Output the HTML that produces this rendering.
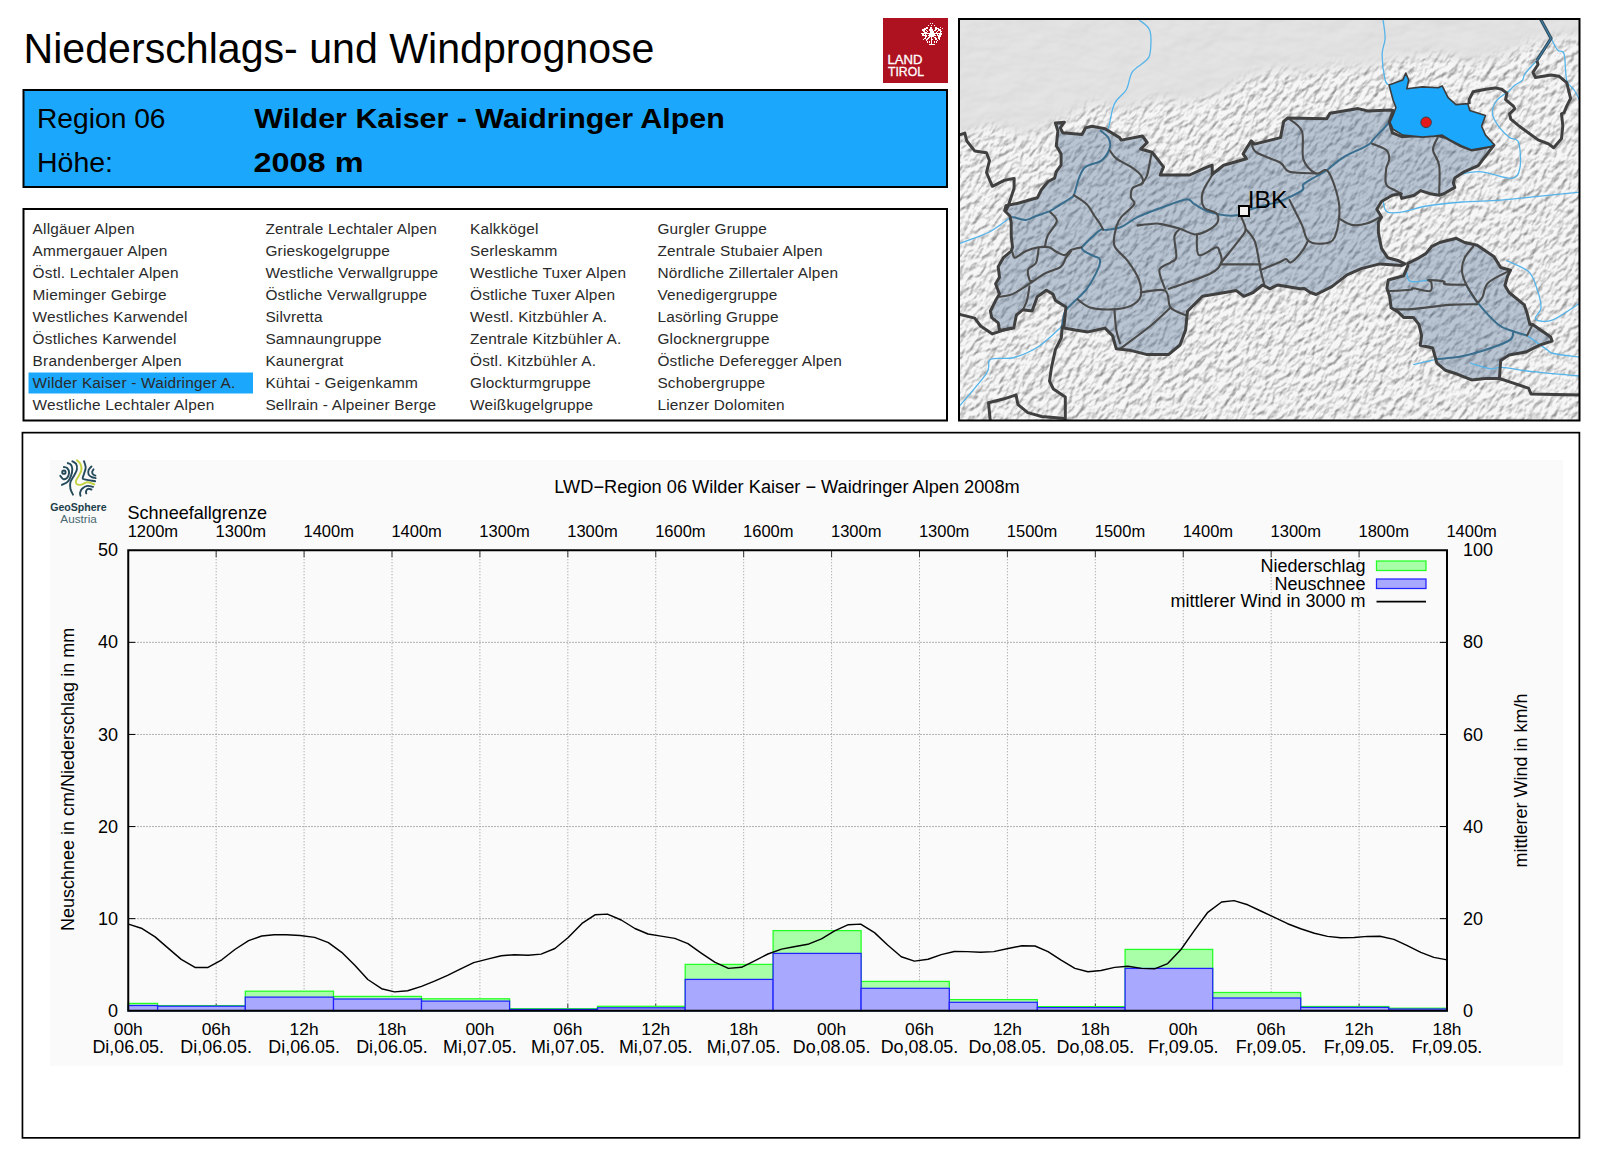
<!DOCTYPE html><html><head><meta charset="utf-8"><style>html,body{margin:0;padding:0;background:#fff;width:1600px;height:1153px;overflow:hidden}svg{display:block}text{font-family:"Liberation Sans",sans-serif}</style></head><body>
<svg width="1600" height="1153" viewBox="0 0 1600 1153">
<text x="23.5" y="62.6" font-size="43" textLength="631" lengthAdjust="spacingAndGlyphs" fill="#000">Niederschlags- und Windprognose</text>
<rect x="883" y="18" width="65" height="65" fill="#ae1120"/>
<text x="887.5" y="63.9" font-size="12.2" fill="#fff" stroke="#fff" stroke-width="0.3" textLength="35" lengthAdjust="spacingAndGlyphs">LAND</text>
<text x="888" y="75.7" font-size="12.2" fill="#fff" stroke="#fff" stroke-width="0.3" textLength="36" lengthAdjust="spacingAndGlyphs">TIROL</text>
<g fill="#fff" shape-rendering="crispEdges">
<rect x="930" y="23" width="1" height="1"/><rect x="932" y="23" width="1" height="1"/><rect x="928" y="25" width="1" height="1"/><rect x="931" y="25" width="1" height="1"/><rect x="934" y="25" width="1" height="1"/><rect x="926" y="27" width="2" height="1"/><rect x="930" y="27" width="2" height="1"/><rect x="935" y="27" width="2" height="1"/><rect x="940" y="27" width="1" height="1"/><rect x="924" y="28" width="4" height="1"/><rect x="930" y="28" width="2" height="1"/><rect x="935" y="28" width="4" height="1"/><rect x="942" y="28" width="1" height="1"/><rect x="922" y="29" width="4" height="1"/><rect x="929" y="29" width="4" height="1"/><rect x="935" y="29" width="2" height="1"/><rect x="938" y="29" width="3" height="1"/><rect x="922" y="30" width="3" height="1"/><rect x="926" y="30" width="1" height="1"/><rect x="929" y="30" width="4" height="1"/><rect x="934" y="30" width="2" height="1"/><rect x="938" y="30" width="3" height="1"/><rect x="923" y="31" width="2" height="1"/><rect x="927" y="31" width="1" height="1"/><rect x="930" y="31" width="4" height="1"/><rect x="937" y="31" width="1" height="1"/><rect x="940" y="31" width="2" height="1"/><rect x="924" y="32" width="3" height="1"/><rect x="930" y="32" width="4" height="1"/><rect x="936" y="32" width="1" height="1"/><rect x="940" y="32" width="1" height="1"/><rect x="921" y="33" width="21" height="1"/><rect x="922" y="34" width="2" height="1"/><rect x="925" y="34" width="1" height="1"/><rect x="929" y="34" width="6" height="1"/><rect x="937" y="34" width="1" height="1"/><rect x="939" y="34" width="3" height="1"/><rect x="922" y="35" width="5" height="1"/><rect x="928" y="35" width="8" height="1"/><rect x="937" y="35" width="4" height="1"/><rect x="925" y="36" width="2" height="1"/><rect x="929" y="36" width="5" height="1"/><rect x="938" y="36" width="3" height="1"/><rect x="925" y="37" width="1" height="1"/><rect x="928" y="37" width="2" height="1"/><rect x="931" y="37" width="1" height="1"/><rect x="934" y="37" width="2" height="1"/><rect x="938" y="37" width="2" height="1"/><rect x="924" y="38" width="2" height="1"/><rect x="927" y="38" width="2" height="1"/><rect x="931" y="38" width="1" height="1"/><rect x="935" y="38" width="2" height="1"/><rect x="938" y="38" width="2" height="1"/><rect x="923" y="39" width="1" height="1"/><rect x="926" y="39" width="2" height="1"/><rect x="931" y="39" width="2" height="1"/><rect x="935" y="39" width="2" height="1"/><rect x="939" y="39" width="1" height="1"/><rect x="926" y="40" width="1" height="1"/><rect x="931" y="40" width="1" height="1"/><rect x="937" y="40" width="1" height="1"/><rect x="927" y="41" width="1" height="1"/><rect x="929" y="41" width="1" height="1"/><rect x="931" y="41" width="1" height="1"/><rect x="934" y="41" width="1" height="1"/><rect x="936" y="41" width="1" height="1"/><rect x="927" y="42" width="1" height="1"/><rect x="929" y="42" width="1" height="1"/><rect x="931" y="42" width="1" height="1"/><rect x="934" y="42" width="1" height="1"/><rect x="936" y="42" width="1" height="1"/><rect x="931" y="43" width="1" height="1"/><rect x="929" y="44" width="6" height="1"/>
</g>
<rect x="23.5" y="90" width="923.5" height="97" fill="#1ba8fc" stroke="#000" stroke-width="2"/>
<text x="37" y="128.4" font-size="28" textLength="128.5" lengthAdjust="spacingAndGlyphs">Region 06</text>
<text x="37" y="172" font-size="28" textLength="76" lengthAdjust="spacingAndGlyphs">Höhe:</text>
<text x="254.3" y="128.4" font-size="28" font-weight="bold" textLength="470.5" lengthAdjust="spacingAndGlyphs">Wilder Kaiser - Waidringer Alpen</text>
<text x="253.5" y="172" font-size="28" font-weight="bold" textLength="110" lengthAdjust="spacingAndGlyphs">2008 m</text>
<rect x="23.5" y="209" width="923.5" height="211.5" fill="#fff" stroke="#000" stroke-width="2"/>
<rect x="28.5" y="372.5" width="224.5" height="21" fill="#1ba8fc"/>
<g font-size="15.4" fill="#2a2a2a" letter-spacing="0.2">
<text x="32.6" y="234.1">Allgäuer Alpen</text>
<text x="32.6" y="256.1">Ammergauer Alpen</text>
<text x="32.6" y="278.1">Östl. Lechtaler Alpen</text>
<text x="32.6" y="300.1">Mieminger Gebirge</text>
<text x="32.6" y="322.1">Westliches Karwendel</text>
<text x="32.6" y="344.1">Östliches Karwendel</text>
<text x="32.6" y="366.1">Brandenberger Alpen</text>
<text x="32.6" y="388.1">Wilder Kaiser - Waidringer A.</text>
<text x="32.6" y="410.1">Westliche Lechtaler Alpen</text>
<text x="265.4" y="234.1">Zentrale Lechtaler Alpen</text>
<text x="265.4" y="256.1">Grieskogelgruppe</text>
<text x="265.4" y="278.1">Westliche Verwallgruppe</text>
<text x="265.4" y="300.1">Östliche Verwallgruppe</text>
<text x="265.4" y="322.1">Silvretta</text>
<text x="265.4" y="344.1">Samnaungruppe</text>
<text x="265.4" y="366.1">Kaunergrat</text>
<text x="265.4" y="388.1">Kühtai - Geigenkamm</text>
<text x="265.4" y="410.1">Sellrain - Alpeiner Berge</text>
<text x="470" y="234.1">Kalkkögel</text>
<text x="470" y="256.1">Serleskamm</text>
<text x="470" y="278.1">Westliche Tuxer Alpen</text>
<text x="470" y="300.1">Östliche Tuxer Alpen</text>
<text x="470" y="322.1">Westl. Kitzbühler A.</text>
<text x="470" y="344.1">Zentrale Kitzbühler A.</text>
<text x="470" y="366.1">Östl. Kitzbühler A.</text>
<text x="470" y="388.1">Glockturmgruppe</text>
<text x="470" y="410.1">Weißkugelgruppe</text>
<text x="657.4" y="234.1">Gurgler Gruppe</text>
<text x="657.4" y="256.1">Zentrale Stubaier Alpen</text>
<text x="657.4" y="278.1">Nördliche Zillertaler Alpen</text>
<text x="657.4" y="300.1">Venedigergruppe</text>
<text x="657.4" y="322.1">Lasörling Gruppe</text>
<text x="657.4" y="344.1">Glocknergruppe</text>
<text x="657.4" y="366.1">Östliche Deferegger Alpen</text>
<text x="657.4" y="388.1">Schobergruppe</text>
<text x="657.4" y="410.1">Lienzer Dolomiten</text>
</g>
<defs><clipPath id="mclip"><rect x="959" y="19" width="620.5" height="401.5"/></clipPath></defs>
<filter id="relief" filterUnits="userSpaceOnUse" x="700" y="-300" width="1200" height="1000" color-interpolation-filters="sRGB"><feTurbulence type="fractalNoise" baseFrequency="0.2 0.11" numOctaves="3" seed="5" result="n"/><feDiffuseLighting in="n" surfaceScale="2.6" diffuseConstant="1.2" lighting-color="#ffffff"><feDistantLight azimuth="210" elevation="50"/></feDiffuseLighting></filter>
<filter id="relief2" filterUnits="userSpaceOnUse" x="700" y="-300" width="1200" height="1000" color-interpolation-filters="sRGB"><feTurbulence type="fractalNoise" baseFrequency="0.03 0.05" numOctaves="3" seed="3" result="n"/><feDiffuseLighting in="n" surfaceScale="2" diffuseConstant="1.0" lighting-color="#ffffff"><feDistantLight azimuth="235" elevation="60"/></feDiffuseLighting></filter>
<filter id="soft" x="-20%" y="-20%" width="140%" height="140%"><feGaussianBlur stdDeviation="6"/></filter>
<mask id="alpmask" maskUnits="userSpaceOnUse" x="900" y="0" width="720" height="480"><polygon points="930.0,140.0 960.6,136.1 989.5,123.8 1022.5,136.1 1063.8,119.6 1096.8,103.1 1125.6,111.4 1154.5,99.0 1187.5,103.1 1220.5,94.9 1245.3,78.4 1278.3,70.1 1311.3,74.3 1336.0,66.0 1360.8,70.1 1385.5,61.9 1414.4,57.8 1443.3,53.6 1468.1,61.9 1496.9,57.8 1525.8,45.4 1558.8,37.1 1600.0,37.0 1600.0,460.0 930.0,460.0" fill="#fff" filter="url(#soft)"/></mask>
<rect x="959" y="19" width="620.5" height="401.5" fill="#e2e2e2"/>
<g clip-path="url(#mclip)">
<rect x="959" y="19" width="620.5" height="401.5" fill="#fff" filter="url(#relief2)" opacity="0.15"/>
<g mask="url(#alpmask)">
<rect x="959" y="19" width="620.5" height="401.5" fill="#f0f0f0"/>
<rect x="850" y="-300" width="900" height="1000" fill="#fff" filter="url(#relief)" opacity="0.5" transform="rotate(35 1270 220)"/>
</g>
<polygon points="1009.9,216.0 1004.7,210.8 1006.0,205.6 1019.0,203.0 1037.3,197.8 1041.2,190.0 1048.1,181.5 1054.6,178.2 1056.3,171.7 1061.1,165.2 1061.1,153.9 1056.3,145.7 1057.9,131.1 1055.4,123.0 1064.4,122.2 1060.3,127.9 1062.7,132.7 1082.2,134.4 1085.5,127.9 1092.0,126.2 1105.0,128.7 1119.6,137.6 1121.2,140.1 1142.4,136.0 1147.2,142.5 1140.7,149.0 1152.1,152.2 1163.5,166.9 1160.2,175.0 1189.5,175.0 1207.4,166.9 1212.2,165.2 1212.2,174.2 1223.6,165.2 1246.4,158.7 1243.1,153.9 1251.2,140.9 1254.4,144.1 1280.5,137.6 1283.7,121.4 1287.8,118.0 1326.8,118.7 1330.0,113.3 1358.1,108.6 1367.4,110.9 1390.8,110.1 1393.0,110.5 1389.3,121.9 1392.4,132.8 1401.8,136.7 1412.7,135.9 1436.1,135.1 1445.5,137.5 1459.5,145.3 1472.0,150.0 1481.4,148.4 1493.9,145.3 1483.0,159.3 1478.3,165.6 1464.2,171.8 1454.8,178.1 1453.3,182.7 1454.8,187.4 1443.9,193.7 1439.2,195.2 1429.9,193.7 1420.5,190.6 1414.3,195.2 1401.8,198.4 1400.2,193.7 1392.4,195.2 1381.5,201.5 1376.8,209.3 1381.5,217.1 1378.4,221.8 1378.4,232.7 1381.5,248.3 1387.7,257.7 1398.7,260.8 1404.9,263.9 1401.8,265.5 1379.9,263.9 1361.2,268.6 1347.1,274.9 1331.9,286.6 1316.2,294.5 1310.3,292.5 1304.4,288.6 1300.0,288.8 1277.5,285.0 1270.0,288.8 1262.5,285.0 1253.1,292.5 1243.8,296.3 1236.3,290.6 1225.0,292.5 1202.5,296.3 1187.5,311.3 1185.6,330.0 1180.0,345.0 1168.8,354.4 1146.3,354.4 1131.3,350.6 1116.3,348.8 1112.5,335.6 1105.0,328.1 1088.1,331.9 1075.0,330.0 1063.8,328.1 1065.9,307.1 1055.5,300.6 1052.9,294.1 1046.4,290.2 1037.3,296.7 1032.1,311.0 1023.0,309.7 1016.4,315.0 1013.8,328.0 999.5,330.6 998.2,322.8 991.7,317.6 990.4,311.0 995.6,300.6 999.5,294.1 995.6,283.7 999.5,277.2 998.2,266.8 1003.4,257.7 1011.2,251.2 1012.5,247.3 1011.2,235.6 1011.2,222.5" fill="#4a6c90" fill-opacity="0.36"/>
<polygon points="1407.8,266.1 1403.6,275.8 1388.3,280.0 1386.9,288.3 1389.7,296.6 1391.1,307.7 1398.0,311.9 1403.6,317.4 1413.3,317.4 1418.9,324.4 1421.6,335.5 1420.2,345.2 1432.7,348.0 1436.9,363.2 1445.2,370.2 1457.7,374.3 1471.6,379.9 1485.5,378.5 1499.4,378.5 1500.7,360.5 1509.1,354.9 1525.7,352.1 1539.6,345.2 1552.1,341.0 1550.7,336.9 1532.7,324.4 1529.9,324.4 1527.1,313.3 1524.3,304.9 1509.1,292.5 1504.9,285.5 1507.7,275.8 1510.5,270.2 1500.7,267.5 1493.8,256.4 1477.2,245.3 1464.7,242.5 1456.3,238.3 1439.7,242.5 1431.4,246.7 1425.8,253.6 1418.9,257.8 1407.8,263.3" fill="#4a6c90" fill-opacity="0.36"/>
<path d="M1383.1,19.9 C1383.4,23.0 1385.3,32.9 1385.1,38.6 C1384.9,44.4 1382.1,47.5 1382.1,54.4 C1382.1,61.3 1383.9,74.9 1385.1,80.0 C1386.2,85.1 1388.3,84.1 1389.0,84.9" fill="none" stroke="#55b4ea" stroke-width="1.3"/>
<path d="M1551.1,38.4 C1552.2,40.4 1555.4,47.5 1557.6,50.1 C1559.8,52.7 1562.6,49.0 1564.1,54.0 C1565.6,59.0 1565.0,74.0 1566.7,80.1 C1568.4,86.2 1572.3,87.0 1574.5,90.5 C1576.7,94.0 1579.1,99.2 1580.0,101.0" fill="none" stroke="#55b4ea" stroke-width="1.3"/>
<path d="M1536.8,60.6 C1534.8,62.8 1527.5,70.3 1525.1,73.6 C1522.7,76.8 1524.2,78.1 1522.5,80.1 C1520.8,82.0 1516.9,83.6 1514.7,85.3 C1512.5,87.0 1512.5,87.9 1509.5,90.5 C1506.5,93.1 1499.2,97.0 1496.4,100.9 C1493.6,104.8 1492.1,109.6 1492.5,113.9 C1492.9,118.2 1496.2,123.0 1499.0,126.9 C1501.8,130.8 1506.2,134.8 1509.5,137.4 C1512.8,140.0 1516.9,137.5 1518.6,142.6 C1520.3,147.7 1521.2,162.0 1519.9,168.0 C1518.7,174.0 1517.5,177.8 1511.1,178.4 C1504.7,179.0 1490.0,172.4 1481.4,171.8 C1472.8,171.2 1464.2,173.6 1459.5,174.9 C1454.8,176.2 1454.3,178.8 1453.3,179.6" fill="none" stroke="#55b4ea" stroke-width="1.3"/>
<path d="M1383.1,202.0 C1383.8,203.7 1383.8,210.2 1387.1,211.9 C1390.4,213.6 1396.2,212.9 1402.8,211.9 C1409.3,210.9 1416.6,207.7 1426.4,206.0 C1436.2,204.3 1449.4,203.0 1461.9,202.0 C1474.4,201.0 1488.2,201.1 1501.3,200.1 C1514.4,199.1 1527.5,197.4 1540.6,196.1 C1553.7,194.8 1573.4,192.8 1580.0,192.2" fill="none" stroke="#55b4ea" stroke-width="1.3"/>
<path d="M1506.3,260.5 C1510.0,262.4 1523.4,267.0 1528.5,271.6 C1533.6,276.2 1534.7,282.3 1536.8,288.3 C1538.9,294.3 1541.2,302.6 1541.0,307.7 C1540.8,312.8 1533.7,316.7 1535.5,318.8 C1537.3,320.9 1544.7,322.8 1552.1,320.2 C1559.5,317.6 1575.3,305.9 1580.0,303.0" fill="none" stroke="#55b4ea" stroke-width="1.3"/>
<path d="M1406.4,271.6 C1407.1,273.2 1406.8,280.0 1410.5,281.4 C1414.2,282.8 1425.6,280.2 1428.6,280.0" fill="none" stroke="#55b4ea" stroke-width="1.3"/>
<path d="M1413.3,364.6 L1436.9,359.1" fill="none" stroke="#55b4ea" stroke-width="1.3"/>
<path d="M1470.2,363.2 C1473.7,364.1 1485.7,368.1 1491.0,368.8 C1496.3,369.5 1495.1,366.9 1502.1,367.4 C1509.0,367.9 1519.7,370.2 1532.7,371.6 C1545.7,373.0 1572.1,375.3 1580.0,376.0" fill="none" stroke="#55b4ea" stroke-width="1.3"/>
<path d="M1527.1,335.5 C1530.3,337.8 1542.2,346.4 1546.6,349.4 C1551.0,352.4 1547.9,352.2 1553.5,353.5 C1559.1,354.8 1575.6,356.4 1580.0,357.0" fill="none" stroke="#55b4ea" stroke-width="1.3"/>
<path d="M958.0,244.0 C960.1,243.2 965.4,241.5 970.8,239.4 C976.2,237.3 983.8,235.1 990.4,231.5 C997.0,227.9 1006.8,220.0 1010.1,217.7" fill="none" stroke="#55b4ea" stroke-width="1.3"/>
<path d="M1062.3,326.0 C1058.5,329.3 1047.7,340.4 1039.7,345.7 C1031.7,350.9 1022.3,355.2 1014.1,357.5 C1005.9,359.8 995.0,356.9 990.4,359.5 C985.8,362.1 991.8,365.4 986.5,373.3 C981.2,381.2 963.5,401.1 958.9,406.7" fill="none" stroke="#55b4ea" stroke-width="1.3"/>
<path d="M1139.1,19.9 C1140.9,21.7 1148.1,25.1 1149.9,30.8 C1151.7,36.5 1150.9,49.1 1149.9,54.4 C1148.9,59.6 1147.0,59.3 1144.0,62.3 C1141.0,65.2 1135.2,67.5 1132.2,72.1 C1129.2,76.7 1129.2,84.5 1126.3,89.8 C1123.3,95.0 1117.5,97.4 1114.5,103.6 C1111.5,109.8 1110.2,122.6 1108.6,127.2 C1106.9,131.8 1105.3,130.5 1104.6,131.2" fill="none" stroke="#55b4ea" stroke-width="1.3"/>
<path d="M1100.1,130.3 C1101.4,131.5 1106.6,134.8 1108.2,137.6 C1109.8,140.4 1111.0,143.6 1109.9,147.4 C1108.8,151.2 1105.8,157.2 1101.7,160.4 C1097.6,163.7 1089.3,163.9 1085.5,166.9 C1081.7,169.9 1080.9,173.6 1079.0,178.2 C1077.1,182.8 1075.4,191.2 1074.1,194.5 C1072.8,197.8 1073.3,196.2 1071.1,197.8 C1068.9,199.4 1064.2,202.1 1060.7,204.3 C1057.2,206.5 1054.4,208.9 1050.3,210.8 C1046.2,212.8 1040.1,214.5 1036.0,216.0 C1031.9,217.5 1029.3,219.7 1025.6,219.9 C1021.9,220.1 1016.4,217.7 1013.8,217.3 C1011.2,216.9 1010.5,217.3 1009.9,217.3" fill="none" stroke="#3a6e8f" stroke-width="2"/>
<path d="M1081.5,247.3 C1084.5,244.5 1095.2,233.5 1099.4,230.6 C1103.6,227.7 1103.0,230.5 1106.6,229.9 C1110.2,229.3 1116.0,229.1 1121.2,227.0 C1126.4,224.9 1130.7,220.4 1137.5,217.2 C1144.3,213.9 1153.8,210.5 1161.9,207.5 C1170.0,204.5 1180.8,200.0 1186.2,199.4 C1191.6,198.8 1190.3,202.0 1194.4,204.2 C1198.5,206.4 1203.8,210.5 1210.6,212.4 C1217.4,214.3 1228.2,216.2 1235.0,215.6 C1241.8,215.0 1244.4,211.3 1251.2,209.1 C1258.0,206.9 1270.8,203.9 1275.6,202.6 C1280.4,201.3 1275.6,203.5 1280.0,201.5 C1284.4,199.5 1298.0,193.5 1301.9,190.6 C1305.8,187.7 1301.1,186.7 1303.4,184.3 C1305.7,182.0 1312.0,178.8 1315.9,176.5 C1319.8,174.2 1322.4,173.4 1326.8,170.3 C1331.2,167.2 1335.7,162.0 1342.5,157.8 C1349.3,153.6 1362.2,148.4 1367.4,145.3 C1372.6,142.2 1370.1,142.9 1373.7,139.0 C1377.3,135.1 1386.1,126.7 1389.3,121.9 C1392.5,117.2 1392.4,112.4 1393.0,110.5" fill="none" stroke="#3a6e8f" stroke-width="2"/>
<path d="M1081.5,247.3 C1081.9,248.0 1081.9,249.7 1084.1,251.2 C1086.3,252.7 1091.9,255.1 1094.5,256.4 C1097.1,257.7 1099.0,257.1 1099.7,259.0 C1100.4,260.9 1100.6,263.1 1098.4,268.1 C1096.2,273.1 1091.2,282.8 1086.7,288.9 C1082.2,295.0 1074.8,300.6 1071.1,304.5 C1067.4,308.4 1066.1,308.7 1064.6,312.3 C1063.1,315.9 1062.4,324.0 1061.9,326.3" fill="none" stroke="#3a6e8f" stroke-width="2"/>
<path d="M1466.1,284.8 C1467.9,287.7 1471.9,295.6 1477.2,302.2 C1482.5,308.8 1492.0,319.5 1498.0,324.4 C1504.0,329.2 1508.4,329.4 1513.2,331.3 C1518.0,333.2 1524.8,334.8 1527.1,335.5" fill="none" stroke="#3a6e8f" stroke-width="2"/>
<path d="M1513.2,331.3 C1512.8,332.7 1514.2,336.8 1510.5,339.6 C1506.8,342.4 1499.1,345.2 1491.0,348.0 C1482.9,350.8 1470.9,354.4 1461.9,356.3 C1452.9,358.2 1441.1,358.6 1436.9,359.1" fill="none" stroke="#3a6e8f" stroke-width="2"/>
<path d="M1073.7,195.2 C1075.9,196.7 1083.2,200.8 1086.7,204.3 C1090.2,207.8 1092.3,212.8 1094.5,216.0 C1096.7,219.2 1098.6,221.5 1100.0,223.8 C1101.4,226.1 1102.6,228.7 1103.1,229.7" fill="none" stroke="#4a4a4a" stroke-width="2.1" stroke-linejoin="round" stroke-linecap="round"/>
<path d="M1050.3,212.1 C1051.4,213.6 1057.2,217.3 1056.8,221.2 C1056.4,225.1 1049.7,231.5 1047.7,235.6 C1045.8,239.7 1045.5,244.3 1045.1,246.0" fill="none" stroke="#4a4a4a" stroke-width="2.1" stroke-linejoin="round" stroke-linecap="round"/>
<path d="M1012.5,252.5 C1012.9,253.4 1012.9,257.9 1015.1,257.7 C1017.3,257.5 1021.7,252.9 1025.6,251.2 C1029.5,249.5 1034.7,248.0 1038.6,247.3 C1042.5,246.7 1046.2,246.7 1049.0,247.3 C1051.8,248.0 1052.9,249.9 1055.5,251.2 C1058.1,252.5 1062.0,255.3 1064.6,255.1 C1067.2,254.9 1068.3,251.2 1071.1,249.9 C1073.9,248.6 1079.8,247.7 1081.5,247.3" fill="none" stroke="#4a4a4a" stroke-width="2.1" stroke-linejoin="round" stroke-linecap="round"/>
<path d="M1038.6,248.6 C1038.2,251.0 1037.7,259.4 1036.0,262.9 C1034.3,266.4 1029.3,266.6 1028.2,269.4 C1027.1,272.2 1028.8,277.9 1029.5,279.8 C1030.2,281.8 1031.7,280.9 1032.1,281.1" fill="none" stroke="#4a4a4a" stroke-width="2.1" stroke-linejoin="round" stroke-linecap="round"/>
<path d="M999.5,296.7 C1001.7,296.3 1007.5,296.3 1012.5,294.1 C1017.5,291.9 1024.1,287.2 1029.5,283.7 C1034.9,280.2 1039.9,276.1 1045.1,273.3 C1050.3,270.5 1057.2,269.4 1060.7,266.8 C1064.2,264.2 1064.2,260.3 1065.9,257.7 C1067.6,255.1 1070.2,252.3 1071.1,251.2" fill="none" stroke="#4a4a4a" stroke-width="2.1" stroke-linejoin="round" stroke-linecap="round"/>
<path d="M1029.5,286.3 C1029.1,288.7 1028.0,296.7 1026.9,300.6 C1025.8,304.5 1023.6,308.2 1023.0,309.7" fill="none" stroke="#4a4a4a" stroke-width="2.1" stroke-linejoin="round" stroke-linecap="round"/>
<path d="M1109.9,150.6 C1111.0,151.9 1112.9,156.0 1116.4,158.7 C1119.9,161.4 1127.0,164.2 1131.0,166.9 C1135.0,169.6 1138.8,172.3 1140.7,175.0 C1142.6,177.7 1143.8,180.9 1142.4,183.1 C1141.1,185.3 1134.5,185.6 1132.6,188.0 C1130.7,190.4 1130.7,195.0 1131.0,197.7 C1131.3,200.4 1135.8,200.9 1134.2,204.2 C1132.6,207.4 1124.2,213.4 1121.2,217.2 C1118.2,221.0 1117.4,222.2 1116.3,226.9 C1115.2,231.6 1112.5,240.0 1114.4,245.6 C1116.3,251.2 1123.4,255.0 1127.5,260.6 C1131.6,266.2 1136.6,273.4 1138.8,279.4 C1141.0,285.3 1141.8,291.9 1140.6,296.3 C1139.3,300.7 1136.0,303.4 1131.3,305.6 C1126.6,307.8 1119.4,309.1 1112.5,309.4 C1105.6,309.7 1095.8,309.2 1090.0,307.5 C1084.2,305.8 1079.7,300.7 1077.6,299.3" fill="none" stroke="#4a4a4a" stroke-width="2.1" stroke-linejoin="round" stroke-linecap="round"/>
<path d="M1152.1,152.2 C1151.8,153.3 1151.3,154.9 1150.5,158.7 C1149.7,162.5 1148.5,170.9 1147.2,175.0 C1145.9,179.1 1143.2,181.8 1142.4,183.1" fill="none" stroke="#4a4a4a" stroke-width="2.1" stroke-linejoin="round" stroke-linecap="round"/>
<path d="M1114.4,309.4 C1114.7,312.8 1115.4,324.4 1116.3,330.0 C1117.2,335.6 1119.4,340.9 1120.0,343.1" fill="none" stroke="#4a4a4a" stroke-width="2.1" stroke-linejoin="round" stroke-linecap="round"/>
<path d="M1140.6,292.5 C1144.7,292.2 1160.0,288.1 1165.0,290.6 C1170.0,293.1 1167.2,303.4 1170.6,307.5 C1174.0,311.6 1183.1,313.8 1185.6,315.0" fill="none" stroke="#4a4a4a" stroke-width="2.1" stroke-linejoin="round" stroke-linecap="round"/>
<path d="M1120.0,348.8 C1125.0,345.1 1141.6,333.2 1150.0,326.3 C1158.4,319.4 1167.2,310.6 1170.6,307.5" fill="none" stroke="#4a4a4a" stroke-width="2.1" stroke-linejoin="round" stroke-linecap="round"/>
<path d="M1137.5,225.4 C1140.2,225.1 1149.7,223.9 1153.7,223.7 C1157.7,223.5 1156.9,223.2 1161.3,224.1 C1165.7,224.9 1174.1,227.1 1180.0,228.8 C1185.9,230.5 1191.0,235.0 1196.9,234.4 C1202.8,233.8 1212.2,228.4 1215.6,225.0 C1219.0,221.6 1219.0,216.9 1217.1,214.0 C1215.2,211.1 1206.5,211.0 1204.1,207.5 C1201.7,204.0 1201.2,198.3 1202.5,192.9 C1203.8,187.5 1210.6,178.0 1212.2,175.0" fill="none" stroke="#4a4a4a" stroke-width="2.1" stroke-linejoin="round" stroke-linecap="round"/>
<path d="M1180.0,228.8 C1179.1,230.1 1175.0,231.6 1174.4,236.3 C1173.8,241.0 1176.9,252.5 1176.3,256.9 C1175.7,261.3 1173.4,260.3 1170.6,262.5 C1167.8,264.7 1160.3,265.6 1159.4,270.0 C1158.5,274.4 1164.1,285.7 1165.0,288.8" fill="none" stroke="#4a4a4a" stroke-width="2.1" stroke-linejoin="round" stroke-linecap="round"/>
<path d="M1196.9,234.4 C1197.2,237.8 1195.7,252.8 1198.8,255.0 C1201.9,257.2 1212.2,248.1 1215.6,247.5 C1219.0,246.9 1218.5,248.8 1219.4,251.3 C1220.4,253.8 1222.9,258.8 1221.3,262.5 C1219.7,266.2 1218.8,269.4 1210.0,273.8 C1201.2,278.2 1175.7,286.3 1168.8,288.8" fill="none" stroke="#4a4a4a" stroke-width="2.1" stroke-linejoin="round" stroke-linecap="round"/>
<path d="M1221.3,262.5 C1224.7,258.1 1237.9,241.9 1241.9,236.3 C1246.0,230.7 1245.7,232.0 1245.6,228.8 C1245.5,225.6 1242.2,219.7 1241.5,217.2 C1240.8,214.7 1241.5,214.5 1241.5,214.0" fill="none" stroke="#4a4a4a" stroke-width="2.1" stroke-linejoin="round" stroke-linecap="round"/>
<path d="M1245.6,228.8 C1247.2,231.0 1252.5,235.0 1255.0,241.9 C1257.5,248.8 1259.0,262.8 1260.6,270.0 C1262.2,277.2 1263.8,282.5 1264.4,285.0" fill="none" stroke="#4a4a4a" stroke-width="2.1" stroke-linejoin="round" stroke-linecap="round"/>
<path d="M1221.3,264.4 L1260.6,264.4" fill="none" stroke="#4a4a4a" stroke-width="2.1" stroke-linejoin="round" stroke-linecap="round"/>
<path d="M1260.6,270.0 C1263.8,268.7 1275.8,263.8 1280.0,262.0 C1284.2,260.2 1284.2,258.9 1286.0,259.0 C1287.8,259.1 1288.3,263.7 1291.0,262.4 C1293.7,261.1 1299.1,255.1 1301.9,251.4 C1304.8,247.8 1307.1,242.3 1308.1,240.5" fill="none" stroke="#4a4a4a" stroke-width="2.1" stroke-linejoin="round" stroke-linecap="round"/>
<path d="M1251.2,140.9 C1252.0,142.8 1251.3,148.6 1256.1,152.2 C1260.9,155.8 1274.5,159.2 1280.0,162.5 C1285.5,165.8 1283.4,170.0 1289.4,171.8 C1295.4,173.6 1311.5,173.1 1315.9,173.4" fill="none" stroke="#4a4a4a" stroke-width="2.1" stroke-linejoin="round" stroke-linecap="round"/>
<path d="M1287.8,118.0 C1290.2,120.2 1299.3,124.3 1301.9,131.2 C1304.5,138.1 1301.1,152.3 1303.4,159.3 C1305.7,166.3 1311.7,171.3 1315.9,173.4 C1320.1,175.5 1324.5,166.3 1328.4,171.8 C1332.3,177.3 1338.3,195.3 1339.3,206.2 C1340.3,217.1 1337.4,231.2 1334.6,237.4 C1331.8,243.6 1326.6,243.1 1322.2,243.6 C1317.8,244.1 1311.5,243.6 1308.1,240.5 C1304.7,237.4 1305.0,231.7 1301.9,224.9 C1298.8,218.1 1291.5,204.1 1289.4,199.9" fill="none" stroke="#4a4a4a" stroke-width="2.1" stroke-linejoin="round" stroke-linecap="round"/>
<path d="M1339.3,218.7 C1341.4,219.7 1347.1,224.1 1351.8,224.9 C1356.5,225.7 1362.7,224.6 1367.4,223.3 C1372.1,222.0 1377.8,218.1 1379.9,217.1" fill="none" stroke="#4a4a4a" stroke-width="2.1" stroke-linejoin="round" stroke-linecap="round"/>
<path d="M1372.1,143.7 C1374.4,144.8 1383.3,147.4 1386.2,150.0 C1389.1,152.6 1389.3,156.2 1389.3,159.3 C1389.3,162.4 1386.7,164.5 1386.2,168.7 C1385.7,172.9 1384.7,180.7 1386.2,184.3 C1387.8,188.0 1392.9,189.0 1395.5,190.6 C1398.1,192.2 1400.8,193.2 1401.8,193.7" fill="none" stroke="#4a4a4a" stroke-width="2.1" stroke-linejoin="round" stroke-linecap="round"/>
<path d="M1437.7,137.5 C1436.9,139.6 1432.8,145.3 1433.0,150.0 C1433.2,154.7 1438.2,158.3 1439.2,165.6 C1440.2,172.9 1439.2,189.0 1439.2,193.7" fill="none" stroke="#4a4a4a" stroke-width="2.1" stroke-linejoin="round" stroke-linecap="round"/>
<path d="M1473.0,246.7 C1471.6,248.5 1466.5,253.9 1464.7,257.8 C1462.9,261.7 1461.7,265.8 1461.9,270.2 C1462.1,274.6 1463.5,278.8 1466.1,284.1 C1468.6,289.4 1475.3,299.2 1477.2,302.2" fill="none" stroke="#4a4a4a" stroke-width="2.1" stroke-linejoin="round" stroke-linecap="round"/>
<path d="M1510.5,270.2 C1506.8,272.3 1492.9,278.3 1488.3,282.7 C1483.7,287.1 1484.3,293.4 1482.7,296.6 C1481.1,299.9 1479.2,301.3 1478.5,302.2" fill="none" stroke="#4a4a4a" stroke-width="2.1" stroke-linejoin="round" stroke-linecap="round"/>
<path d="M1388.3,291.1 C1392.0,290.9 1406.3,290.2 1410.5,289.7 C1414.7,289.2 1410.0,288.1 1413.3,288.3 C1416.5,288.5 1427.0,292.0 1430.0,291.1 C1433.0,290.2 1431.6,284.6 1431.4,282.7 C1431.2,280.8 1426.5,280.2 1428.6,280.0 C1430.7,279.8 1441.0,280.7 1443.8,281.4 C1446.6,282.1 1441.5,283.5 1445.2,284.1 C1448.9,284.7 1462.6,284.7 1466.1,284.8" fill="none" stroke="#4a4a4a" stroke-width="2.1" stroke-linejoin="round" stroke-linecap="round"/>
<path d="M1392.5,309.1 C1395.7,309.1 1402.4,309.8 1411.9,309.1 C1421.4,308.4 1438.5,305.7 1449.4,304.9 C1460.3,304.1 1472.6,304.4 1477.2,304.3" fill="none" stroke="#4a4a4a" stroke-width="2.1" stroke-linejoin="round" stroke-linecap="round"/>
<path d="M1527.1,335.5 L1532.7,324.4" fill="none" stroke="#4a4a4a" stroke-width="2.1" stroke-linejoin="round" stroke-linecap="round"/>
<polygon points="1009.9,216.0 1004.7,210.8 1006.0,205.6 1019.0,203.0 1037.3,197.8 1041.2,190.0 1048.1,181.5 1054.6,178.2 1056.3,171.7 1061.1,165.2 1061.1,153.9 1056.3,145.7 1057.9,131.1 1055.4,123.0 1064.4,122.2 1060.3,127.9 1062.7,132.7 1082.2,134.4 1085.5,127.9 1092.0,126.2 1105.0,128.7 1119.6,137.6 1121.2,140.1 1142.4,136.0 1147.2,142.5 1140.7,149.0 1152.1,152.2 1163.5,166.9 1160.2,175.0 1189.5,175.0 1207.4,166.9 1212.2,165.2 1212.2,174.2 1223.6,165.2 1246.4,158.7 1243.1,153.9 1251.2,140.9 1254.4,144.1 1280.5,137.6 1283.7,121.4 1287.8,118.0 1326.8,118.7 1330.0,113.3 1358.1,108.6 1367.4,110.9 1390.8,110.1 1393.0,110.5 1389.3,121.9 1392.4,132.8 1401.8,136.7 1412.7,135.9 1436.1,135.1 1445.5,137.5 1459.5,145.3 1472.0,150.0 1481.4,148.4 1493.9,145.3 1483.0,159.3 1478.3,165.6 1464.2,171.8 1454.8,178.1 1453.3,182.7 1454.8,187.4 1443.9,193.7 1439.2,195.2 1429.9,193.7 1420.5,190.6 1414.3,195.2 1401.8,198.4 1400.2,193.7 1392.4,195.2 1381.5,201.5 1376.8,209.3 1381.5,217.1 1378.4,221.8 1378.4,232.7 1381.5,248.3 1387.7,257.7 1398.7,260.8 1404.9,263.9 1401.8,265.5 1379.9,263.9 1361.2,268.6 1347.1,274.9 1331.9,286.6 1316.2,294.5 1310.3,292.5 1304.4,288.6 1300.0,288.8 1277.5,285.0 1270.0,288.8 1262.5,285.0 1253.1,292.5 1243.8,296.3 1236.3,290.6 1225.0,292.5 1202.5,296.3 1187.5,311.3 1185.6,330.0 1180.0,345.0 1168.8,354.4 1146.3,354.4 1131.3,350.6 1116.3,348.8 1112.5,335.6 1105.0,328.1 1088.1,331.9 1075.0,330.0 1063.8,328.1 1065.9,307.1 1055.5,300.6 1052.9,294.1 1046.4,290.2 1037.3,296.7 1032.1,311.0 1023.0,309.7 1016.4,315.0 1013.8,328.0 999.5,330.6 998.2,322.8 991.7,317.6 990.4,311.0 995.6,300.6 999.5,294.1 995.6,283.7 999.5,277.2 998.2,266.8 1003.4,257.7 1011.2,251.2 1012.5,247.3 1011.2,235.6 1011.2,222.5" fill="none" stroke="#404040" stroke-width="3" stroke-linejoin="round"/>
<polygon points="1407.8,266.1 1403.6,275.8 1388.3,280.0 1386.9,288.3 1389.7,296.6 1391.1,307.7 1398.0,311.9 1403.6,317.4 1413.3,317.4 1418.9,324.4 1421.6,335.5 1420.2,345.2 1432.7,348.0 1436.9,363.2 1445.2,370.2 1457.7,374.3 1471.6,379.9 1485.5,378.5 1499.4,378.5 1500.7,360.5 1509.1,354.9 1525.7,352.1 1539.6,345.2 1552.1,341.0 1550.7,336.9 1532.7,324.4 1529.9,324.4 1527.1,313.3 1524.3,304.9 1509.1,292.5 1504.9,285.5 1507.7,275.8 1510.5,270.2 1500.7,267.5 1493.8,256.4 1477.2,245.3 1464.7,242.5 1456.3,238.3 1439.7,242.5 1431.4,246.7 1425.8,253.6 1418.9,257.8 1407.8,263.3" fill="none" stroke="#404040" stroke-width="3" stroke-linejoin="round"/>
<polyline points="1536.8,60.6 1538.1,64.5 1532.9,72.3 1535.5,77.5 1551.1,74.9 1558.9,76.2 1566.7,82.7 1570.6,98.3 1566.7,106.1 1564.1,112.6 1561.5,113.9 1562.8,125.6 1561.5,138.6 1553.7,147.8 1548.5,143.9 1538.1,139.9 1523.8,129.5 1518.6,125.6 1510.8,119.1 1509.5,113.9 1514.7,108.7 1513.4,106.1 1505.6,99.6 1506.9,93.1 1501.7,89.2 1495.1,87.9 1486.0,89.2 1473.0,91.8 1469.1,99.6 1469.1,104.0" fill="none" stroke="#404040" stroke-width="3" stroke-linejoin="round"/>
<polyline points="958.9,135.1 964.8,133.1 966.8,141.0 974.7,150.9 986.5,152.8 989.5,160.7 986.5,172.5 992.4,186.3 1004.2,180.4 1014.1,178.4 1014.1,188.3 1008.2,206.0 1005.2,211.9" fill="none" stroke="#404040" stroke-width="3" stroke-linejoin="round"/>
<polyline points="958.9,314.2 974.7,318.1 980.6,326.0 992.4,333.9 1004.2,329.9 1012.1,328.0" fill="none" stroke="#404040" stroke-width="3" stroke-linejoin="round"/>
<polyline points="1062.3,326.0 1061.3,337.8 1055.4,349.6 1051.5,367.4 1049.5,381.1 1053.4,389.0 1065.3,396.9 1065.3,422.0" fill="none" stroke="#404040" stroke-width="3" stroke-linejoin="round"/>
<polyline points="990.4,422.0 988.5,402.8 1004.2,398.8 1016.0,394.9 1018.0,404.7 1027.8,412.6 1041.6,416.5 1065.3,418.5" fill="none" stroke="#404040" stroke-width="3" stroke-linejoin="round"/>
<polyline points="1499.4,378.5 1511.9,382.7 1528.5,388.2 1531.0,393.9 1580.0,394.9" fill="none" stroke="#404040" stroke-width="3" stroke-linejoin="round"/>
<polyline points="1539.4,17 1551.1,38.4 1536.8,60.6" fill="none" stroke="#34505f" stroke-width="3.2" stroke-linejoin="round"/>
<polyline points="1539.4,17 1551.1,38.4 1536.8,60.6" fill="none" stroke="#3d86b8" stroke-width="1" stroke-linejoin="round"/>
<polygon points="1389.0,84.9 1402.8,80.0 1405.8,73.1 1408.7,80.0 1406.8,88.8 1422.5,86.9 1438.3,87.8 1442.2,85.9 1448.1,97.7 1456.0,104.6 1467.8,103.6 1469.8,110.5 1485.5,115.4 1481.6,126.2 1485.5,135.1 1494.4,144.9 1489.5,146.9 1471.7,149.9 1461.9,145.9 1450.1,140.0 1442.2,135.1 1434.3,136.1 1422.5,137.1 1402.8,135.1 1393.0,129.2 1390.0,122.3 1393.0,115.4 1395.9,107.5 1393.0,99.7" fill="#1ba8fc" stroke="#3c3c3c" stroke-width="1.6" stroke-linejoin="round"/>
<circle cx="1426.1" cy="122.3" r="5.3" fill="#e41a1c" stroke="#333" stroke-width="0.8"/>
<rect x="1239" y="206" width="10" height="10" fill="#f2f2f2" stroke="#000" stroke-width="2"/>
<text x="1247.8" y="207.6" font-size="24" fill="#000" textLength="39.5" lengthAdjust="spacingAndGlyphs">IBK</text>
</g>
<rect x="959" y="19" width="620.5" height="401.5" fill="none" stroke="#000" stroke-width="2"/>
<rect x="22.45" y="432.65" width="1556.95" height="705.2" fill="#fff" stroke="#000" stroke-width="1.7"/>
<rect x="50" y="460" width="1513" height="605.8" fill="#fafafa"/>
<line x1="216.17" y1="550.25" x2="216.17" y2="1010.75" stroke="#999" stroke-width="1" stroke-dasharray="1,2"/>
<line x1="304.08" y1="550.25" x2="304.08" y2="1010.75" stroke="#999" stroke-width="1" stroke-dasharray="1,2"/>
<line x1="392.00" y1="550.25" x2="392.00" y2="1010.75" stroke="#999" stroke-width="1" stroke-dasharray="1,2"/>
<line x1="479.92" y1="550.25" x2="479.92" y2="1010.75" stroke="#999" stroke-width="1" stroke-dasharray="1,2"/>
<line x1="567.83" y1="550.25" x2="567.83" y2="1010.75" stroke="#999" stroke-width="1" stroke-dasharray="1,2"/>
<line x1="655.75" y1="550.25" x2="655.75" y2="1010.75" stroke="#999" stroke-width="1" stroke-dasharray="1,2"/>
<line x1="743.67" y1="550.25" x2="743.67" y2="1010.75" stroke="#999" stroke-width="1" stroke-dasharray="1,2"/>
<line x1="831.58" y1="550.25" x2="831.58" y2="1010.75" stroke="#999" stroke-width="1" stroke-dasharray="1,2"/>
<line x1="919.50" y1="550.25" x2="919.50" y2="1010.75" stroke="#999" stroke-width="1" stroke-dasharray="1,2"/>
<line x1="1007.42" y1="550.25" x2="1007.42" y2="1010.75" stroke="#999" stroke-width="1" stroke-dasharray="1,2"/>
<line x1="1095.33" y1="550.25" x2="1095.33" y2="1010.75" stroke="#999" stroke-width="1" stroke-dasharray="1,2"/>
<line x1="1183.25" y1="550.25" x2="1183.25" y2="1010.75" stroke="#999" stroke-width="1" stroke-dasharray="1,2"/>
<line x1="1271.17" y1="550.25" x2="1271.17" y2="1010.75" stroke="#999" stroke-width="1" stroke-dasharray="1,2"/>
<line x1="1359.08" y1="550.25" x2="1359.08" y2="1010.75" stroke="#999" stroke-width="1" stroke-dasharray="1,2"/>
<line x1="128.25" y1="918.65" x2="1447.0" y2="918.65" stroke="#999" stroke-width="1" stroke-dasharray="1.5,1.5"/>
<line x1="128.25" y1="826.55" x2="1447.0" y2="826.55" stroke="#999" stroke-width="1" stroke-dasharray="1.5,1.5"/>
<line x1="128.25" y1="734.45" x2="1447.0" y2="734.45" stroke="#999" stroke-width="1" stroke-dasharray="1.5,1.5"/>
<line x1="128.25" y1="642.35" x2="1447.0" y2="642.35" stroke="#999" stroke-width="1" stroke-dasharray="1.5,1.5"/>
<line x1="216.17" y1="550.25" x2="216.17" y2="557.25" stroke="#222" stroke-width="0.9"/>
<line x1="216.17" y1="1010.75" x2="216.17" y2="1003.75" stroke="#222" stroke-width="0.9"/>
<line x1="304.08" y1="550.25" x2="304.08" y2="557.25" stroke="#222" stroke-width="0.9"/>
<line x1="304.08" y1="1010.75" x2="304.08" y2="1003.75" stroke="#222" stroke-width="0.9"/>
<line x1="392.00" y1="550.25" x2="392.00" y2="557.25" stroke="#222" stroke-width="0.9"/>
<line x1="392.00" y1="1010.75" x2="392.00" y2="1003.75" stroke="#222" stroke-width="0.9"/>
<line x1="479.92" y1="550.25" x2="479.92" y2="557.25" stroke="#222" stroke-width="0.9"/>
<line x1="479.92" y1="1010.75" x2="479.92" y2="1003.75" stroke="#222" stroke-width="0.9"/>
<line x1="567.83" y1="550.25" x2="567.83" y2="557.25" stroke="#222" stroke-width="0.9"/>
<line x1="567.83" y1="1010.75" x2="567.83" y2="1003.75" stroke="#222" stroke-width="0.9"/>
<line x1="655.75" y1="550.25" x2="655.75" y2="557.25" stroke="#222" stroke-width="0.9"/>
<line x1="655.75" y1="1010.75" x2="655.75" y2="1003.75" stroke="#222" stroke-width="0.9"/>
<line x1="743.67" y1="550.25" x2="743.67" y2="557.25" stroke="#222" stroke-width="0.9"/>
<line x1="743.67" y1="1010.75" x2="743.67" y2="1003.75" stroke="#222" stroke-width="0.9"/>
<line x1="831.58" y1="550.25" x2="831.58" y2="557.25" stroke="#222" stroke-width="0.9"/>
<line x1="831.58" y1="1010.75" x2="831.58" y2="1003.75" stroke="#222" stroke-width="0.9"/>
<line x1="919.50" y1="550.25" x2="919.50" y2="557.25" stroke="#222" stroke-width="0.9"/>
<line x1="919.50" y1="1010.75" x2="919.50" y2="1003.75" stroke="#222" stroke-width="0.9"/>
<line x1="1007.42" y1="550.25" x2="1007.42" y2="557.25" stroke="#222" stroke-width="0.9"/>
<line x1="1007.42" y1="1010.75" x2="1007.42" y2="1003.75" stroke="#222" stroke-width="0.9"/>
<line x1="1095.33" y1="550.25" x2="1095.33" y2="557.25" stroke="#222" stroke-width="0.9"/>
<line x1="1095.33" y1="1010.75" x2="1095.33" y2="1003.75" stroke="#222" stroke-width="0.9"/>
<line x1="1183.25" y1="550.25" x2="1183.25" y2="557.25" stroke="#222" stroke-width="0.9"/>
<line x1="1183.25" y1="1010.75" x2="1183.25" y2="1003.75" stroke="#222" stroke-width="0.9"/>
<line x1="1271.17" y1="550.25" x2="1271.17" y2="557.25" stroke="#222" stroke-width="0.9"/>
<line x1="1271.17" y1="1010.75" x2="1271.17" y2="1003.75" stroke="#222" stroke-width="0.9"/>
<line x1="1359.08" y1="550.25" x2="1359.08" y2="557.25" stroke="#222" stroke-width="0.9"/>
<line x1="1359.08" y1="1010.75" x2="1359.08" y2="1003.75" stroke="#222" stroke-width="0.9"/>
<line x1="128.25" y1="918.65" x2="135.25" y2="918.65" stroke="#000" stroke-width="1"/>
<line x1="1447.0" y1="918.65" x2="1440.0" y2="918.65" stroke="#000" stroke-width="1"/>
<line x1="128.25" y1="826.55" x2="135.25" y2="826.55" stroke="#000" stroke-width="1"/>
<line x1="1447.0" y1="826.55" x2="1440.0" y2="826.55" stroke="#000" stroke-width="1"/>
<line x1="128.25" y1="734.45" x2="135.25" y2="734.45" stroke="#000" stroke-width="1"/>
<line x1="1447.0" y1="734.45" x2="1440.0" y2="734.45" stroke="#000" stroke-width="1"/>
<line x1="128.25" y1="642.35" x2="135.25" y2="642.35" stroke="#000" stroke-width="1"/>
<line x1="1447.0" y1="642.35" x2="1440.0" y2="642.35" stroke="#000" stroke-width="1"/>
<rect x="128.25" y="1003.40" width="29.35" height="7.35" fill="#a8ffa8" stroke="#22ff22" stroke-width="1.25"/>
<rect x="157.60" y="1005.60" width="87.70" height="5.15" fill="#a8ffa8" stroke="#22ff22" stroke-width="1.25"/>
<rect x="245.30" y="991.20" width="88.20" height="19.55" fill="#a8ffa8" stroke="#22ff22" stroke-width="1.25"/>
<rect x="333.50" y="996.40" width="88.00" height="14.35" fill="#a8ffa8" stroke="#22ff22" stroke-width="1.25"/>
<rect x="421.50" y="998.80" width="88.10" height="11.95" fill="#a8ffa8" stroke="#22ff22" stroke-width="1.25"/>
<rect x="509.60" y="1008.70" width="87.90" height="2.05" fill="#a8ffa8" stroke="#22ff22" stroke-width="1.25"/>
<rect x="597.50" y="1006.30" width="87.70" height="4.45" fill="#a8ffa8" stroke="#22ff22" stroke-width="1.25"/>
<rect x="685.20" y="964.40" width="87.90" height="46.35" fill="#a8ffa8" stroke="#22ff22" stroke-width="1.25"/>
<rect x="773.10" y="930.60" width="88.00" height="80.15" fill="#a8ffa8" stroke="#22ff22" stroke-width="1.25"/>
<rect x="861.10" y="981.40" width="88.20" height="29.35" fill="#a8ffa8" stroke="#22ff22" stroke-width="1.25"/>
<rect x="949.30" y="999.60" width="88.00" height="11.15" fill="#a8ffa8" stroke="#22ff22" stroke-width="1.25"/>
<rect x="1037.30" y="1006.60" width="87.80" height="4.15" fill="#a8ffa8" stroke="#22ff22" stroke-width="1.25"/>
<rect x="1125.10" y="949.40" width="87.60" height="61.35" fill="#a8ffa8" stroke="#22ff22" stroke-width="1.25"/>
<rect x="1212.70" y="992.50" width="88.00" height="18.25" fill="#a8ffa8" stroke="#22ff22" stroke-width="1.25"/>
<rect x="1300.70" y="1006.50" width="88.10" height="4.25" fill="#a8ffa8" stroke="#22ff22" stroke-width="1.25"/>
<rect x="1388.80" y="1008.20" width="58.20" height="2.55" fill="#a8ffa8" stroke="#22ff22" stroke-width="1.25"/>
<rect x="128.25" y="1005.50" width="29.35" height="5.25" fill="#a8a8ff" stroke="#2222ff" stroke-width="1.25"/>
<rect x="157.60" y="1006.20" width="87.70" height="4.55" fill="#a8a8ff" stroke="#2222ff" stroke-width="1.25"/>
<rect x="245.30" y="997.10" width="88.20" height="13.65" fill="#a8a8ff" stroke="#2222ff" stroke-width="1.25"/>
<rect x="333.50" y="999.00" width="88.00" height="11.75" fill="#a8a8ff" stroke="#2222ff" stroke-width="1.25"/>
<rect x="421.50" y="1001.10" width="88.10" height="9.65" fill="#a8a8ff" stroke="#2222ff" stroke-width="1.25"/>
<rect x="509.60" y="1009.40" width="87.90" height="1.35" fill="#a8a8ff" stroke="#2222ff" stroke-width="1.25"/>
<rect x="597.50" y="1007.80" width="87.70" height="2.95" fill="#a8a8ff" stroke="#2222ff" stroke-width="1.25"/>
<rect x="685.20" y="979.40" width="87.90" height="31.35" fill="#a8a8ff" stroke="#2222ff" stroke-width="1.25"/>
<rect x="773.10" y="953.40" width="88.00" height="57.35" fill="#a8a8ff" stroke="#2222ff" stroke-width="1.25"/>
<rect x="861.10" y="988.30" width="88.20" height="22.45" fill="#a8a8ff" stroke="#2222ff" stroke-width="1.25"/>
<rect x="949.30" y="1002.30" width="88.00" height="8.45" fill="#a8a8ff" stroke="#2222ff" stroke-width="1.25"/>
<rect x="1037.30" y="1007.60" width="87.80" height="3.15" fill="#a8a8ff" stroke="#2222ff" stroke-width="1.25"/>
<rect x="1125.10" y="968.40" width="87.60" height="42.35" fill="#a8a8ff" stroke="#2222ff" stroke-width="1.25"/>
<rect x="1212.70" y="998.00" width="88.00" height="12.75" fill="#a8a8ff" stroke="#2222ff" stroke-width="1.25"/>
<rect x="1300.70" y="1007.40" width="88.10" height="3.35" fill="#a8a8ff" stroke="#2222ff" stroke-width="1.25"/>
<rect x="1388.80" y="1009.00" width="58.20" height="1.75" fill="#a8a8ff" stroke="#2222ff" stroke-width="1.25"/>
<polyline points="128.5,924.1 141.3,928.2 155.1,936.9 168.1,948.1 181.2,959.4 195.0,967.4 208.0,967.4 221.8,959.8 234.9,949.5 248.6,940.6 261.7,936.0 274.1,934.7 286.4,934.7 300.2,935.5 314.6,937.4 328.4,942.6 341.7,952.3 354.8,965.3 367.8,979.5 381.6,988.7 394.6,991.9 407.7,990.8 421.5,986.4 434.5,981.2 447.6,975.4 460.7,968.8 473.7,962.6 487.5,959.1 501.3,955.7 514.3,954.7 528.1,955.3 541.1,954.1 554.9,948.5 568.2,937.5 582.0,923.4 595.0,914.8 607.4,914.1 621.2,920.0 634.9,928.5 648.0,934.0 661.0,936.1 674.8,938.4 687.9,943.6 701.6,953.3 714.7,962.2 728.4,968.4 741.5,967.3 754.6,960.8 767.9,954.0 781.6,949.1 794.0,946.8 807.8,944.3 821.5,938.8 834.6,930.9 848.3,924.7 860.7,924.1 874.5,932.6 887.6,945.0 901.3,956.7 914.4,961.1 928.1,959.2 941.2,954.6 954.3,951.5 967.0,951.6 980.6,952.3 993.7,951.6 1008.1,948.5 1021.9,945.7 1035.0,946.0 1048.0,951.6 1061.1,960.2 1074.9,968.4 1087.9,971.8 1101.0,970.5 1114.7,967.4 1127.8,966.3 1141.6,968.4 1154.6,968.8 1167.7,963.6 1181.0,949.5 1194.1,930.9 1207.8,912.3 1221.6,902.0 1234.0,900.6 1247.7,904.8 1260.8,911.0 1273.9,917.1 1287.6,923.7 1300.7,928.8 1314.4,933.2 1327.5,936.4 1340.6,937.8 1354.3,937.5 1367.4,936.4 1379.9,936.3 1393.9,939.4 1406.8,945.4 1420.8,952.4 1433.8,957.4 1447.0,959.9" fill="none" stroke="#000" stroke-width="1.45" stroke-linejoin="round"/>
<rect x="128.25" y="550.25" width="1318.75" height="460.50" fill="none" stroke="#000" stroke-width="2"/>
<g font-size="18" text-anchor="end">
<text x="118" y="1016.8">0</text>
<text x="118" y="924.6">10</text>
<text x="118" y="832.5">20</text>
<text x="118" y="740.5">30</text>
<text x="118" y="648.4">40</text>
<text x="118" y="556.2">50</text>
</g>
<g font-size="18" text-anchor="start">
<text x="1463" y="1016.8">0</text>
<text x="1463" y="924.6">20</text>
<text x="1463" y="832.5">40</text>
<text x="1463" y="740.5">60</text>
<text x="1463" y="648.4">80</text>
<text x="1463" y="556.2">100</text>
</g>
<g font-size="17.4" text-anchor="middle">
<text x="128.25" y="1034.7">00h</text>
<text x="128.25" y="1052.7" font-size="17.9">Di,06.05.</text>
<text x="216.17" y="1034.7">06h</text>
<text x="216.17" y="1052.7" font-size="17.9">Di,06.05.</text>
<text x="304.08" y="1034.7">12h</text>
<text x="304.08" y="1052.7" font-size="17.9">Di,06.05.</text>
<text x="392.00" y="1034.7">18h</text>
<text x="392.00" y="1052.7" font-size="17.9">Di,06.05.</text>
<text x="479.92" y="1034.7">00h</text>
<text x="479.92" y="1052.7" font-size="17.9">Mi,07.05.</text>
<text x="567.83" y="1034.7">06h</text>
<text x="567.83" y="1052.7" font-size="17.9">Mi,07.05.</text>
<text x="655.75" y="1034.7">12h</text>
<text x="655.75" y="1052.7" font-size="17.9">Mi,07.05.</text>
<text x="743.67" y="1034.7">18h</text>
<text x="743.67" y="1052.7" font-size="17.9">Mi,07.05.</text>
<text x="831.58" y="1034.7">00h</text>
<text x="831.58" y="1052.7" font-size="17.9">Do,08.05.</text>
<text x="919.50" y="1034.7">06h</text>
<text x="919.50" y="1052.7" font-size="17.9">Do,08.05.</text>
<text x="1007.42" y="1034.7">12h</text>
<text x="1007.42" y="1052.7" font-size="17.9">Do,08.05.</text>
<text x="1095.33" y="1034.7">18h</text>
<text x="1095.33" y="1052.7" font-size="17.9">Do,08.05.</text>
<text x="1183.25" y="1034.7">00h</text>
<text x="1183.25" y="1052.7" font-size="17.9">Fr,09.05.</text>
<text x="1271.17" y="1034.7">06h</text>
<text x="1271.17" y="1052.7" font-size="17.9">Fr,09.05.</text>
<text x="1359.08" y="1034.7">12h</text>
<text x="1359.08" y="1052.7" font-size="17.9">Fr,09.05.</text>
<text x="1447.00" y="1034.7">18h</text>
<text x="1447.00" y="1052.7" font-size="17.9">Fr,09.05.</text>
</g>
<g font-size="15.8">
<text x="127.65" y="537.2" textLength="50.5" lengthAdjust="spacingAndGlyphs">1200m</text>
<text x="215.57" y="537.2" textLength="50.5" lengthAdjust="spacingAndGlyphs">1300m</text>
<text x="303.48" y="537.2" textLength="50.5" lengthAdjust="spacingAndGlyphs">1400m</text>
<text x="391.40" y="537.2" textLength="50.5" lengthAdjust="spacingAndGlyphs">1400m</text>
<text x="479.32" y="537.2" textLength="50.5" lengthAdjust="spacingAndGlyphs">1300m</text>
<text x="567.23" y="537.2" textLength="50.5" lengthAdjust="spacingAndGlyphs">1300m</text>
<text x="655.15" y="537.2" textLength="50.5" lengthAdjust="spacingAndGlyphs">1600m</text>
<text x="743.07" y="537.2" textLength="50.5" lengthAdjust="spacingAndGlyphs">1600m</text>
<text x="830.98" y="537.2" textLength="50.5" lengthAdjust="spacingAndGlyphs">1300m</text>
<text x="918.90" y="537.2" textLength="50.5" lengthAdjust="spacingAndGlyphs">1300m</text>
<text x="1006.82" y="537.2" textLength="50.5" lengthAdjust="spacingAndGlyphs">1500m</text>
<text x="1094.73" y="537.2" textLength="50.5" lengthAdjust="spacingAndGlyphs">1500m</text>
<text x="1182.65" y="537.2" textLength="50.5" lengthAdjust="spacingAndGlyphs">1400m</text>
<text x="1270.57" y="537.2" textLength="50.5" lengthAdjust="spacingAndGlyphs">1300m</text>
<text x="1358.48" y="537.2" textLength="50.5" lengthAdjust="spacingAndGlyphs">1800m</text>
<text x="1446.40" y="537.2" textLength="50.5" lengthAdjust="spacingAndGlyphs">1400m</text>
</g>
<text x="127.5" y="519" font-size="17.8" textLength="139.5" lengthAdjust="spacingAndGlyphs">Schneefallgrenze</text>
<text x="554.3" y="493.4" font-size="18" textLength="465.5" lengthAdjust="spacingAndGlyphs">LWD−Region 06 Wilder Kaiser − Waidringer Alpen 2008m</text>
<text transform="translate(74.2,931) rotate(-90)" font-size="18">Neuschnee in cm/Niederschlag in mm</text>
<text transform="translate(1527.3,867.5) rotate(-90)" font-size="18">mittlerer Wind in km/h</text>
<g font-size="18" text-anchor="end">
<text x="1365.5" y="572.2">Niederschlag</text>
<text x="1365.5" y="590">Neuschnee</text>
<text x="1365.5" y="607.4">mittlerer Wind in 3000 m</text>
</g>
<rect x="1376.5" y="561" width="49.5" height="9.5" fill="#a8ffa8" stroke="#22ff22" stroke-width="1.25"/>
<rect x="1376.5" y="579" width="49.5" height="9.5" fill="#a8a8ff" stroke="#2222ff" stroke-width="1.25"/>
<line x1="1376.5" y1="601.6" x2="1426" y2="601.6" stroke="#000" stroke-width="1.6"/>
<g fill="none" stroke="#24495a" stroke-width="1.9" stroke-linecap="round">
<circle cx="63.9" cy="472.2" r="1.7"/>
<path d="M60.3,475.8 C60.8,476.4 62.1,478.8 63.2,479.1 C64.3,479.4 66.1,478.9 67.1,477.8 C68.1,476.7 69.1,474.2 69.1,472.6 C69.1,471.0 68.0,468.9 67.1,468.0 C66.2,467.1 64.4,467.2 63.9,467.0"/>
<path d="M61.9,484.9 C62.9,484.4 66.3,483.2 67.8,481.7 C69.3,480.2 70.2,477.9 71.0,475.8 C71.8,473.7 72.3,471.1 72.3,469.3 C72.3,467.5 71.8,465.8 71.0,464.8 C70.2,463.8 68.3,463.4 67.8,463.1"/>
<path d="M73.0,494.7 C72.6,493.7 70.8,490.9 70.4,488.8 C70.0,486.7 69.8,484.6 70.4,482.3 C71.1,480.0 73.2,477.4 74.3,475.2 C75.4,473.0 76.6,471.1 76.9,469.3 C77.2,467.5 77.0,465.5 76.2,464.1 C75.4,462.8 73.0,461.7 72.3,461.2"/>
<path d="M84.0,461.2 C84.3,462.2 85.7,465.3 85.7,467.4 C85.7,469.5 84.5,472.1 84.0,473.9 C83.5,475.7 82.4,477.4 82.7,478.4 C83.0,479.4 83.9,479.2 86.0,479.7 C88.1,480.2 93.6,481.0 95.1,481.3"/>
<path d="M91.5,466.4 C91.0,467.0 89.1,468.6 88.6,470.0 C88.1,471.4 88.1,473.3 88.6,474.5 C89.1,475.7 90.6,476.5 91.8,477.1 C93.0,477.7 95.0,477.9 95.7,478.1"/>
<path d="M93.5,469.3 C93.3,469.7 92.3,471.0 92.2,471.9 C92.1,472.8 92.6,473.9 93.1,474.5 C93.6,475.1 95.0,475.3 95.4,475.5"/>
<path d="M93.1,486.9 C92.1,486.7 89.1,485.6 87.3,485.9 C85.5,486.2 83.3,487.7 82.1,488.8 C80.9,489.9 80.4,491.6 80.1,492.7 C79.8,493.8 80.4,495.2 80.5,495.7"/>
<path d="M91.5,489.5 C90.9,489.4 88.8,488.5 87.9,488.8 C87.0,489.1 86.3,490.6 86.0,491.4 C85.7,492.2 86.2,493.1 86.3,493.4"/>
</g>
<path d="M76.9,460.2 C77.5,460.9 79.8,462.5 80.5,464.1 C81.2,465.7 81.7,468.1 81.4,470.0 C81.1,471.9 79.7,474.0 78.8,475.8 C77.9,477.6 76.2,479.6 75.9,481.0 C75.6,482.4 76.0,483.7 76.9,484.3 C77.8,484.9 79.7,484.9 81.4,484.6 C83.1,484.3 85.1,482.4 87.3,482.3 C89.5,482.2 93.2,484.0 94.4,484.3" fill="none" stroke="#c3d23f" stroke-width="1.9" stroke-linecap="round"/>
<text x="78.4" y="510.6" font-size="11.3" font-weight="bold" fill="#1d3f4a" text-anchor="middle" textLength="56.5" lengthAdjust="spacingAndGlyphs">GeoSphere</text>
<text x="78.6" y="522.7" font-size="11.3" fill="#4a6a72" text-anchor="middle" textLength="36.5" lengthAdjust="spacingAndGlyphs">Austria</text>
</svg></body></html>
